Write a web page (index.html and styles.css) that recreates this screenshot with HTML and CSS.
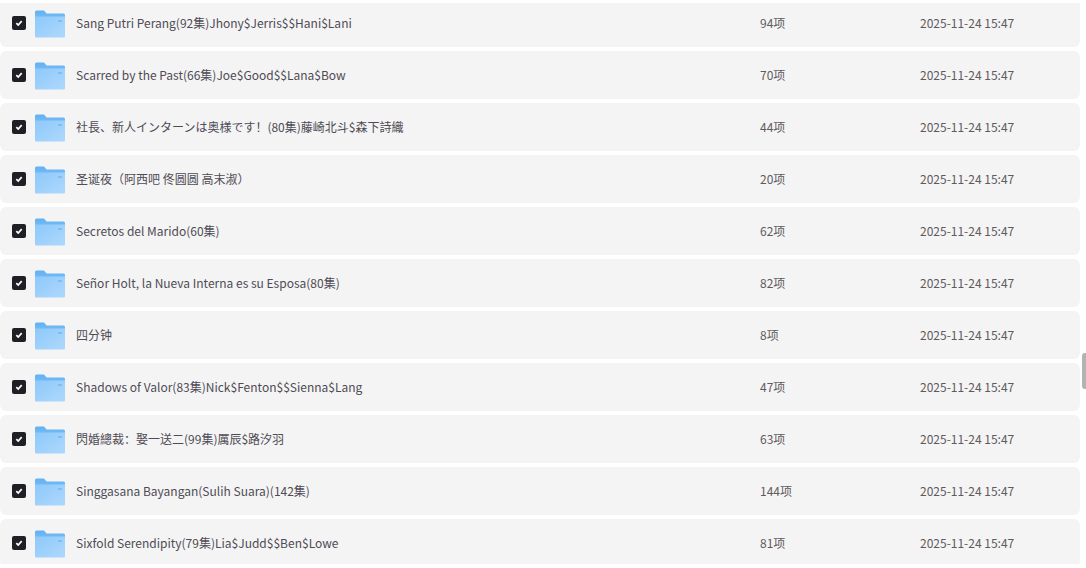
FILE: index.html
```html
<!DOCTYPE html>
<html lang="zh-CN">
<head>
<meta charset="UTF-8">
<meta name="viewport" content="width=device-width, initial-scale=1.0">
<link rel="stylesheet" href="styles.css">
<title>文件列表</title>
</head>
<body>
<svg class="defs" width="0" height="0" aria-hidden="true">
  <defs>
    <linearGradient id="folderBack" x1="0" y1="0" x2="0" y2="1">
      <stop offset="0" stop-color="#62b1f3"/>
      <stop offset="1" stop-color="#7cc0f7"/>
    </linearGradient>
    <linearGradient id="folderFront" x1="0" y1="0" x2="1" y2="1">
      <stop offset="0" stop-color="#8ec9fa"/>
      <stop offset="1" stop-color="#aed8fc"/>
    </linearGradient>
    <symbol id="folder" viewBox="0 0 30 28">
      <path d="M0 2a1.500 1.500 0 0 1 1.500-1.500h7.500l2.500 3h17a1.500 1.500 0 0 1 1.500 1.500v6H0z" fill="url(#folderBack)"/>
      <path d="M0 6.500h30V26.500a1 1 0 0 1-1 1H1a1 1 0 0 1-1-1z" fill="url(#folderFront)"/>
      <rect x="23" y="10" width="4" height="2" fill="#7fbdf3"/>
    </symbol>
    <symbol id="check" viewBox="0 0 14 14">
      <rect width="14" height="14" rx="2" fill="#1f1f26"/>
      <path d="M4.300 7.200l1.900 1.900 3.500-4" fill="none" stroke="#fff" stroke-width="1.700"/>
    </symbol>
  </defs>
</svg>
<div class="top-strip"></div>
<div class="file-list" id="fileList"></div>
<div class="bottom-strip"></div>
<div class="scroll-thumb"></div>

<script>
  const files = [
    ["Sang Putri Perang(92集)Jhony$Jerris$$Hani$Lani", "94项"],
    ["Scarred by the Past(66集)Joe$Good$$Lana$Bow", "70项"],
    ["社長、新人インターンは奥様です！(80集)藤崎北斗$森下詩織", "44项"],
    ["圣诞夜（阿西吧 佟圆圆 高末淑）", "20项"],
    ["Secretos del Marido(60集)", "62项"],
    ["Señor Holt, la Nueva Interna es su Esposa(80集)", "82项"],
    ["四分钟", "8项"],
    ["Shadows of Valor(83集)Nick$Fenton$$Sienna$Lang", "47项"],
    ["閃婚總裁：娶一送二(99集)厲辰$路汐羽", "63项"],
    ["Singgasana Bayangan(Sulih Suara)(142集)", "144项"],
    ["Sixfold Serendipity(79集)Lia$Judd$$Ben$Lowe", "81项"]
  ];

  const list = document.getElementById("fileList");
  files.forEach(function (file) {
    const row = document.createElement("div");
    row.className = "file-row";
    row.innerHTML =
      '<svg class="check-box"><use href="#check"/></svg>' +
      '<svg class="folder-icon"><use href="#folder"/></svg>' +
      '<div class="file-name">' + file[0] + '</div>' +
      '<div class="file-count">' + file[1] + '</div>' +
      '<div class="file-date">2025-11-24 15:47</div>';
    list.appendChild(row);
  });
</script>
</body>
</html>
```

FILE: styles.css
```css
html, body {
  margin: 0;
  height: 100%;
  overflow: hidden;
  background-color: #fff;
}
body {
  font-family: "Noto Sans CJK SC", "Noto Sans", sans-serif;
  font-size: 12px;
  color: #5f5a5e;
}
.defs {
  display: block;
  height: 0;
}
.top-strip {
  position: relative;
  z-index: 1;
  height: 3px;
  background-color: #fff;
}
.bottom-strip {
  position: absolute;
  left: 0;
  right: 0;
  bottom: 0;
  height: 4px;
  background-color: #fff;
}
.file-list {
  display: flex;
  flex-direction: column;
  gap: 4px;
  width: 1080px;
  margin-top: -4px;
}
.file-row {
  display: flex;
  align-items: center;
  flex: none;
  height: 48px;
  padding-left: 12px;
  background-color: #f4f4f4;
  border-radius: 6px;
}
.check-box {
  flex: none;
  width: 14px;
  height: 14px;
}
.folder-icon {
  flex: none;
  width: 30px;
  height: 28px;
  margin-left: 9px;
  margin-top: 1px;
}
.file-name {
  width: 684px;
  margin-left: 11px;
  padding-bottom: 2px;
  color: #4f4b55;
  white-space: nowrap;
}
.file-count {
  width: 160px;
  padding-bottom: 2px;
}
.file-date {
  padding-bottom: 2px;
  white-space: nowrap;
}
.scroll-thumb {
  position: absolute;
  top: 353px;
  right: 0;
  width: 4px;
  height: 36px;
  background-color: #b3b3b3;
  border-radius: 3px 0 0 3px;
}
```
